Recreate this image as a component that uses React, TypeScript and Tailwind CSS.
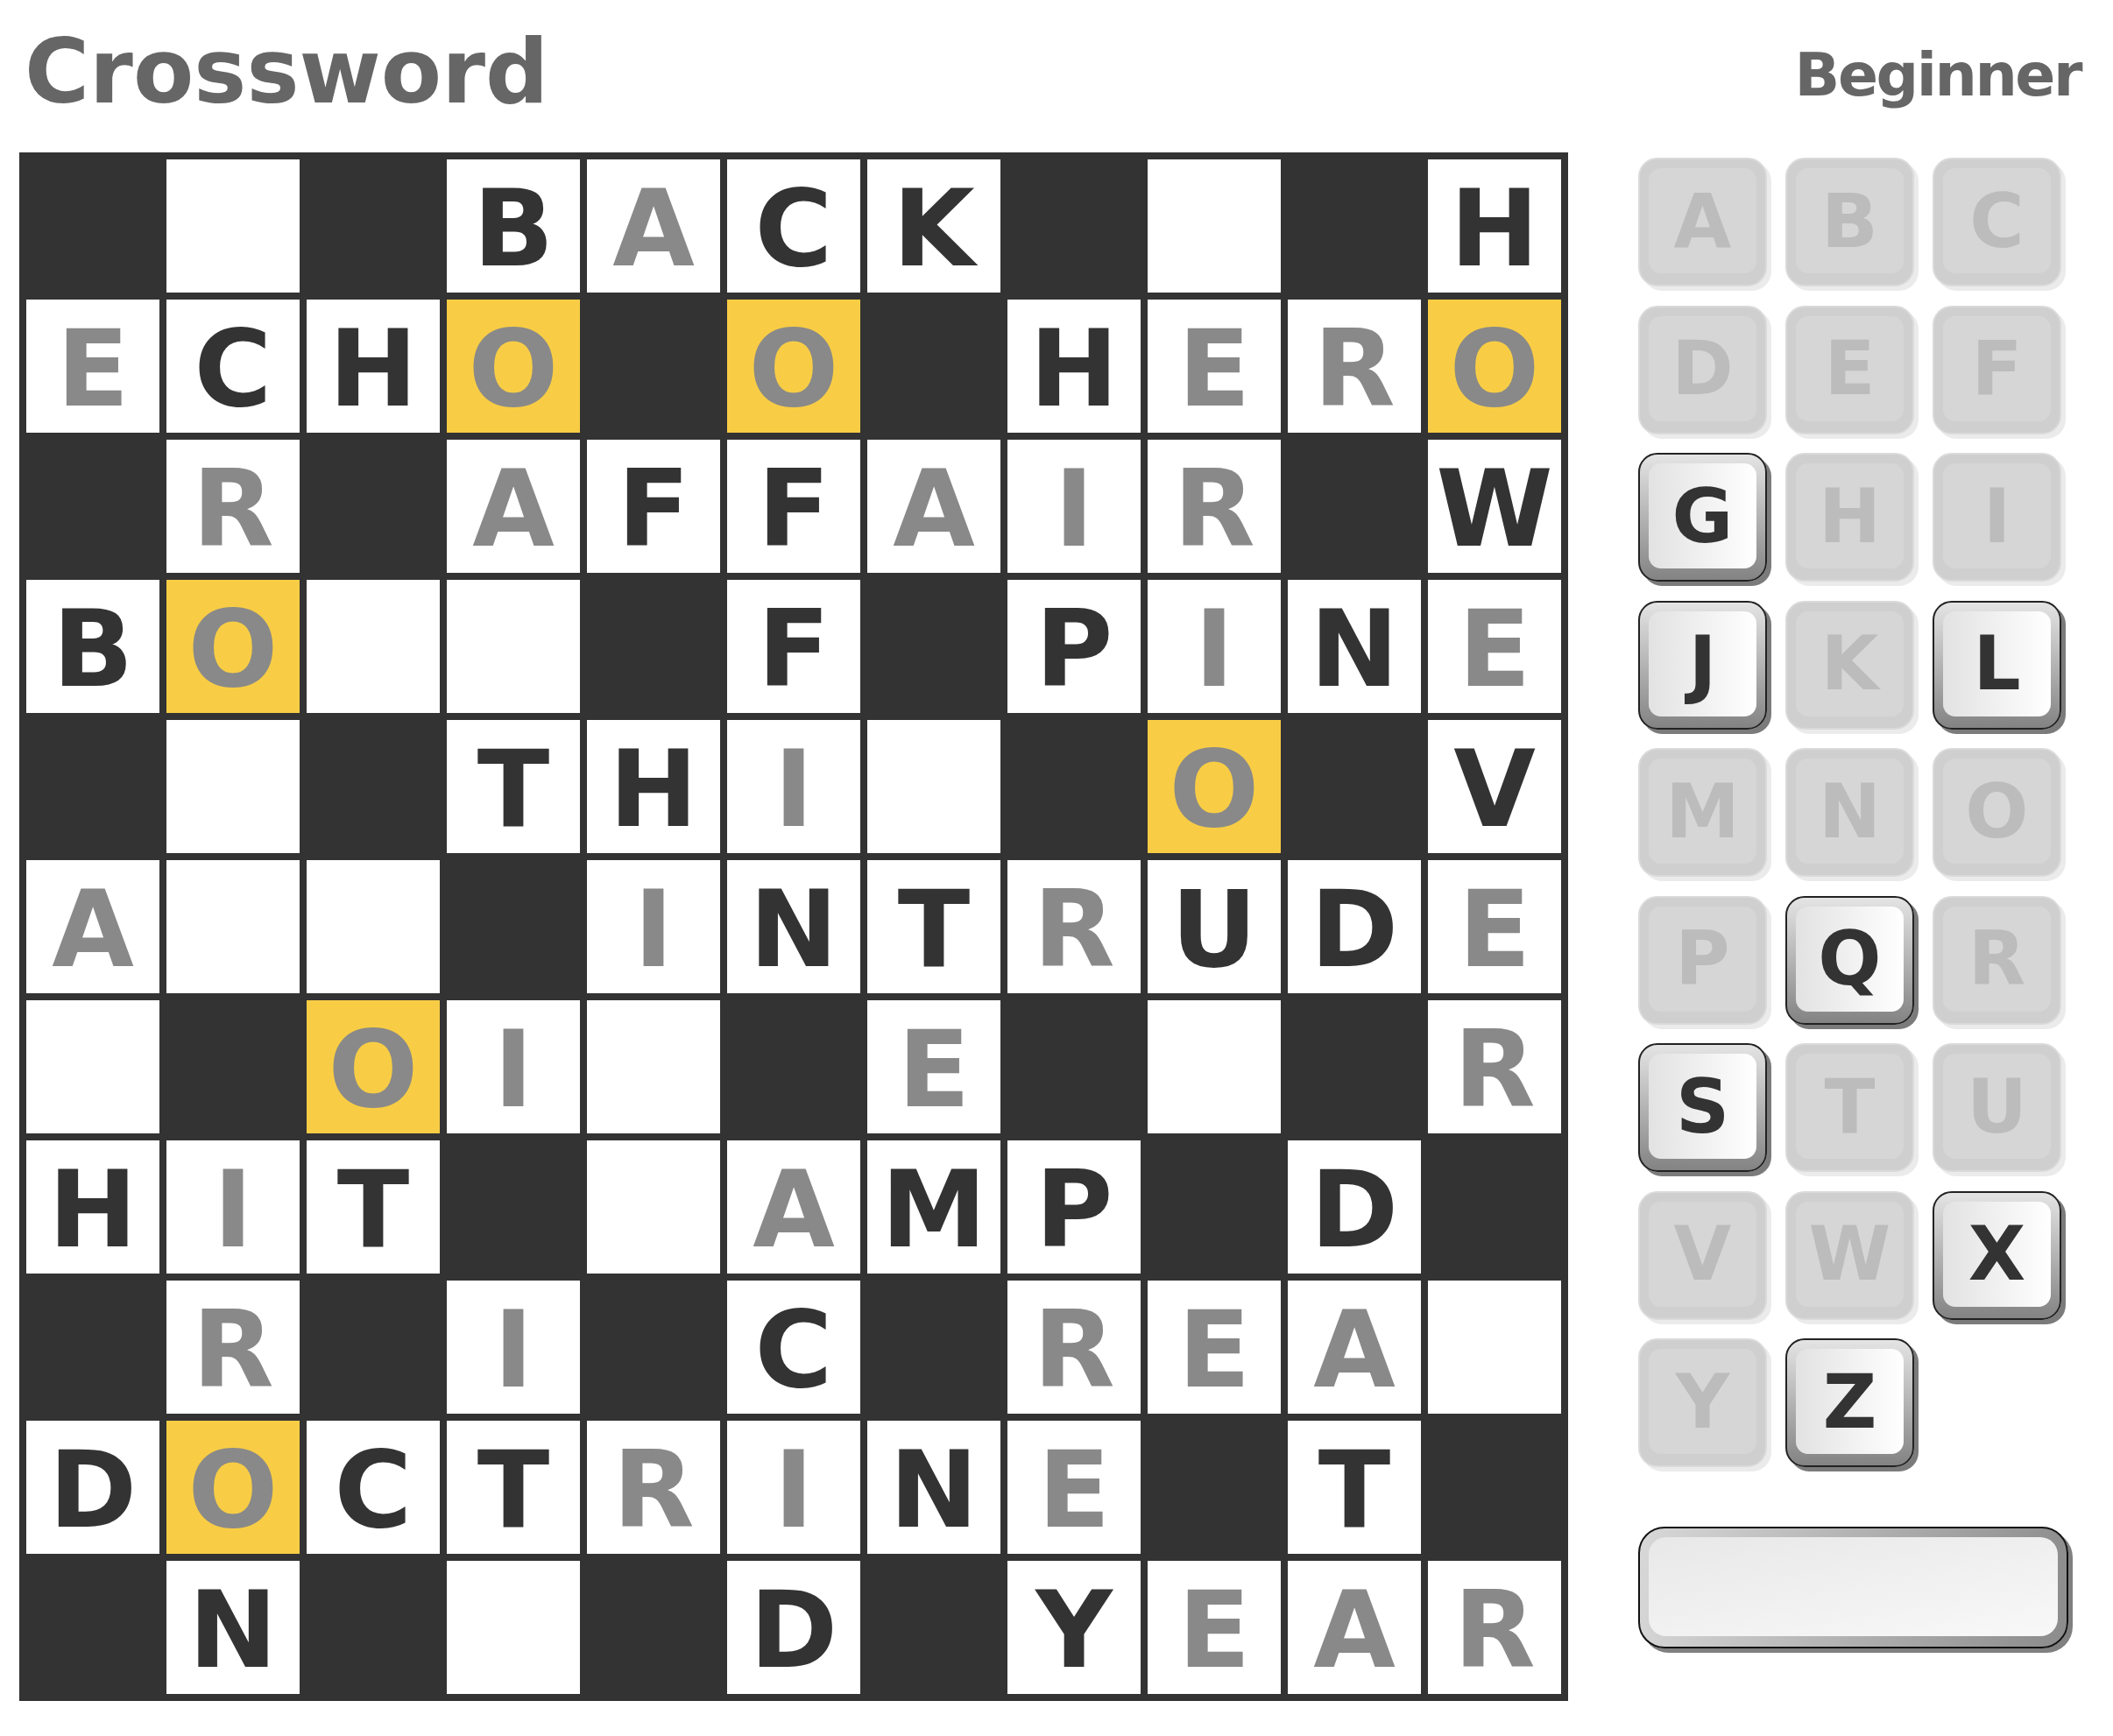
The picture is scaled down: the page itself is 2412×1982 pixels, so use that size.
const rows = [
  '#.#BaCK#.#H',
  'eCH*#*#Her*',
  '#r#aFFair#W',
  'B*..#F#PiNe',
  '#.#THi.#*#V',
  'a..#iNTrUDe',
  '.#*i.#e#.#r',
  'HiT#.aMP#D#',
  '#r#i#C#rea.',
  'D*CTriNe#T#',
  '#N#.#D#Year',
];

const active = ['G', 'J', 'L', 'Q', 'S', 'X', 'Z'];
const letters = 'ABCDEFGHIJKLMNOPQRSTUVWXYZ'.split('');

function Cell({ ch }: { ch: string }) {
  if (ch === '#') return <div className="w-[152px] h-[152px]" />;
  if (ch === '.') return <div className="w-[152px] h-[152px] bg-white" />;
  if (ch === '*')
    return (
      <div className="w-[152px] h-[152px] bg-[#f8cd45] flex items-center justify-center pt-[7px] text-[121px] leading-none text-[#898989]">
        O
      </div>
    );
  const gray = ch === ch.toLowerCase();
  return (
    <div
      className={`w-[152px] h-[152px] bg-white flex items-center justify-center pt-[7px] text-[121px] leading-none ${
        gray ? 'text-[#898989]' : 'text-[#333333]'
      }`}
    >
      {ch.toUpperCase()}
    </div>
  );
}

function Key({ letter }: { letter: string }) {
  if (active.includes(letter)) {
    return (
      <div className="w-[147px] h-[147px] rounded-[22px] border-2 border-[#222] bg-[linear-gradient(to_bottom,#e4e4e4,#838383)] shadow-[5px_5px_0_#7b7b7b] px-[10px] pt-[10px] pb-[13px]">
        <div className="w-full h-full rounded-[14px] bg-[linear-gradient(to_right,#e2e2e2,#ffffff)] flex items-center justify-center text-[85px] leading-none text-[#333333]">
          {letter}
        </div>
      </div>
    );
  }
  return (
    <div className="w-[147px] h-[147px] rounded-[22px] border-2 border-[#dadada] bg-[#cfcfcf] shadow-[5px_5px_0_#ebebeb] px-[10px] pt-[10px] pb-[13px]">
      <div className="w-full h-full rounded-[14px] bg-[#d6d6d6] flex items-center justify-center text-[85px] leading-none text-[#bcbcbc]">
        {letter}
      </div>
    </div>
  );
}

export default function App() {
  return (
    <div className="w-[2412px] h-[1982px] bg-white font-['DejaVu_Sans',sans-serif] font-bold">
      <header className="h-[174px] flex items-start justify-between pl-[28px] pr-[37px]">
        <h1 className="mt-[32px] text-[101px] leading-none text-[#666666]">Crossword</h1>
        <div className="mt-[52px] text-[68px] leading-none tracking-[-2.5px] text-[#666666]">Beginner</div>
      </header>

      <div className="flex items-start pl-[22px]">
        <div className="bg-[#333333] p-[8px] grid grid-cols-[repeat(11,152px)] gap-[8px]">
          {rows.map((row, r) => row.split('').map((ch, c) => <Cell key={`${r}-${c}`} ch={ch} />))}
        </div>

        <div className="ml-[80px] mt-[6px] flex flex-col">
          <div className="grid grid-cols-[repeat(3,147px)] gap-x-[21px] gap-y-[21.5px]">
            {letters.map((l) => (
              <Key key={l} letter={l} />
            ))}
          </div>
          <div className="mt-[68px] w-[491px] h-[139px] rounded-[30px] border-2 border-[#111] bg-[linear-gradient(100deg,#d8d8d8,#8b8b8b)] shadow-[5px_5px_0_#808080] px-[10px] pt-[10px] pb-[12px]">
            <div className="w-full h-full rounded-[20px] bg-[linear-gradient(170deg,#e8e8e8,#f8f8f8)]" />
          </div>
        </div>
      </div>
    </div>
  );
}
